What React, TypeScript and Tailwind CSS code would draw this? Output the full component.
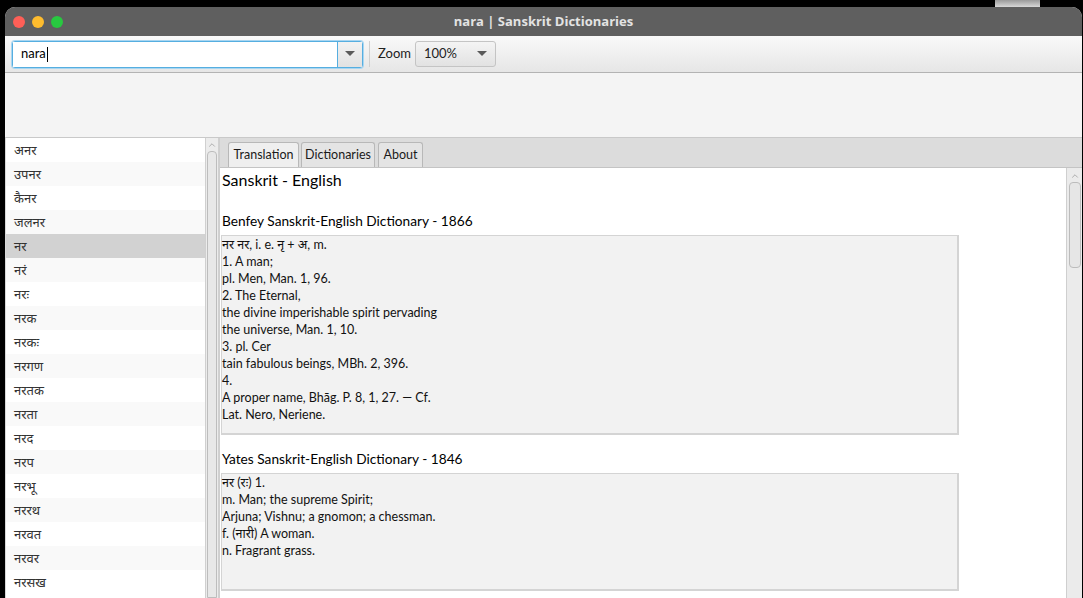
import { ChevronUp } from "lucide-react";

const WORDS = [
  "अनर",
  "उपनर",
  "कैनर",
  "जलनर",
  "नर",
  "नरं",
  "नरः",
  "नरक",
  "नरकः",
  "नरगण",
  "नरतक",
  "नरता",
  "नरद",
  "नरप",
  "नरभू",
  "नररथ",
  "नरवत",
  "नरवर",
  "नरसख",
];

const BENFEY = [
  "नर नर, i. e. नृ + अ, m.",
  "1. A man;",
  "pl. Men, Man. 1, 96.",
  "2. The Eternal,",
  "the divine imperishable spirit pervading",
  "the universe, Man. 1, 10.",
  "3. pl. Cer",
  "tain fabulous beings, MBh. 2, 396.",
  "4.",
  "A proper name, Bhāg. P. 8, 1, 27. — Cf.",
  "Lat. Nero, Neriene.",
];

const YATES = [
  "नर (रः) 1.",
  "m. Man; the supreme Spirit;",
  "Arjuna; Vishnu; a gnomon; a chessman.",
  "f. (नारी) A woman.",
  "n. Fragrant grass.",
];

const FONT = "font-['Lato','Noto_Sans','Noto_Sans_Devanagari',sans-serif]";

function Caret() {
  return (
    <svg width="10" height="6" viewBox="0 0 10 6">
      <path d="M0 0 L10 0 L5 5 Z" fill="#5a5a5a" />
    </svg>
  );
}

function Entry({
  title,
  lines,
  gap,
  height,
}: {
  title: string;
  lines: string[];
  gap: string;
  height: string;
}) {
  return (
    <div>
      <h3 className={`${gap} h-[27px] pl-[1px] text-[13.7px] leading-[26px] text-black`}>{title}</h3>
      <div
        className={`w-[738px] ${height} border border-[#d4d4d4] border-r-[2px] border-b-[2px] bg-[#f2f2f2] text-[12.5px] leading-[17px] text-[#111]`}
      >
        {lines.map((l, i) => (
          <div key={i}>{l}</div>
        ))}
      </div>
    </div>
  );
}

function Tab({ label, width, active }: { label: string; width: string; active?: boolean }) {
  return (
    <div
      className={`${width} h-[25px] rounded-t-[3px] border border-b-0 border-[#b8b8b8] text-center text-[12.5px] leading-[24px] text-[#1a1a1a] ${
        active ? "bg-[#efefef]" : "bg-[#e4e4e4]"
      }`}
    >
      {label}
    </div>
  );
}

export default function App() {
  return (
    <div className={`flex h-[598px] w-[1083px] flex-col overflow-hidden bg-black ${FONT}`}>
      <div className="h-[7px] shrink-0">
        <div className="ml-[995px] h-[7px] w-[45px] bg-gradient-to-b from-[#9a9a9a] to-[#d8d8d8]" />
      </div>
      <div className="ml-[5px] flex h-[591px] w-[1077px] flex-col overflow-hidden rounded-t-[10px] bg-[#f4f4f4]">
        {/* title bar */}
        <div className="relative flex h-[29px] shrink-0 items-center bg-[#5f5f5f]">
          <div className="flex gap-[7px] pl-[8px]">
            <span className="h-[12px] w-[12px] rounded-full bg-[#fe5f57]" />
            <span className="h-[12px] w-[12px] rounded-full bg-[#febc2e]" />
            <span className="h-[12px] w-[12px] rounded-full bg-[#28c840]" />
          </div>
          <div className="absolute inset-x-0 text-center text-[13px] font-bold text-[#e3e3e3] font-['Open_Sans',sans-serif]">
            nara | Sanskrit Dictionaries
          </div>
        </div>

        {/* toolbar */}
        <div className="flex h-[37px] shrink-0 items-center border-b border-[#b3b3b3] bg-gradient-to-b from-[#f9f9f9] to-[#e6e6e6] pl-[7px]">
          <div className="flex h-[27px] w-[351px] rounded-[3px] border border-[#56aee0] shadow-[0_0_0_1px_#a9d6f1]">
            <div className="flex flex-1 items-center bg-white pl-[8px] text-[13px] text-black">
              nara<span className="ml-[1px] h-[15px] w-[1px] bg-black" />
            </div>
            <div className="flex w-[25px] items-center justify-center border-l border-[#56aee0] bg-gradient-to-b from-[#f2f2f2] to-[#e2e2e2]">
              <Caret />
            </div>
          </div>
          <div className="ml-[6px] h-[26px] w-[1px] bg-[#d0d0d0]" />
          <span className="ml-[8px] text-[13px] text-[#222]">Zoom</span>
          <div className="ml-[4px] flex h-[26px] w-[81px] items-center justify-between rounded-[3px] border border-[#c4c4c4] bg-gradient-to-b from-[#f4f4f4] to-[#e2e2e2] pl-[8px] pr-[8px] text-[13px] text-[#222]">
            100%
            <Caret />
          </div>
        </div>

        {/* empty area */}
        <div className="h-[65px] shrink-0 border-b border-[#c9c9c9] bg-[#f4f4f4]" />

        {/* main split */}
        <div className="flex min-h-0 flex-1">
          {/* word list */}
          <div className="flex w-[214px] shrink-0 border-l border-[#d8d8d8]">
            <div className="flex-1 overflow-hidden bg-white">
              {WORDS.map((w, i) => (
                <div
                  key={w}
                  className={`h-[24px] pl-[8px] text-[13px] leading-[24px] text-[#333] ${
                    i === 4 ? "bg-[#d2d2d2]" : i % 2 === 1 ? "bg-[#f9f9f9]" : "bg-white"
                  }`}
                >
                  {w}
                </div>
              ))}
            </div>
            <div className="flex w-[14px] flex-col items-center border-l border-r border-[#d0d0d0] bg-[#ececec]">
              <ChevronUp size={10} strokeWidth={1.5} className="mt-[2px] text-[#888]" />
              <div className="mt-[1px] w-[10px] flex-1 rounded-t-[4px] border border-[#bdbdbd] bg-[#e8e8e8]" />
            </div>
          </div>

          {/* tab pane */}
          <div className="flex min-w-0 flex-1 flex-col border-l border-[#cfcfcf]">
            <div className="flex h-[30px] shrink-0 items-end border-b border-[#c4c4c4] bg-[#dcdcdc] pl-[8px]">
              <Tab label="Translation" width="w-[71px]" active />
              <div className="w-[2px]" />
              <Tab label="Dictionaries" width="w-[74px]" />
              <div className="w-[3px]" />
              <Tab label="About" width="w-[45px]" />
            </div>
            <div className="flex min-h-0 flex-1 bg-white">
              <div className="min-w-0 flex-1 overflow-hidden pl-[1px]">
                <h2 className="mt-[2px] h-[20px] pl-[1px] text-[16px] leading-[20px] text-black">
                  Sanskrit - English
                </h2>
                <Entry
                  title="Benfey Sanskrit-English Dictionary - 1866"
                  lines={BENFEY}
                  gap="mt-[18px]"
                  height="h-[200px]"
                />
                <Entry
                  title="Yates Sanskrit-English Dictionary - 1846"
                  lines={YATES}
                  gap="mt-[11px]"
                  height="h-[118px]"
                />
              </div>
              <div className="flex w-[16px] flex-col items-center border-l border-[#cfcfcf] bg-[#ebebeb]">
                <ChevronUp size={10} strokeWidth={1.5} className="mt-[3px] text-[#888]" />
                <div className="mt-[1px] h-[86px] w-[12px] rounded-[4px] border border-[#bcbcbc] bg-[#e6e6e6]" />
              </div>
            </div>
          </div>
        </div>
      </div>
    </div>
  );
}
